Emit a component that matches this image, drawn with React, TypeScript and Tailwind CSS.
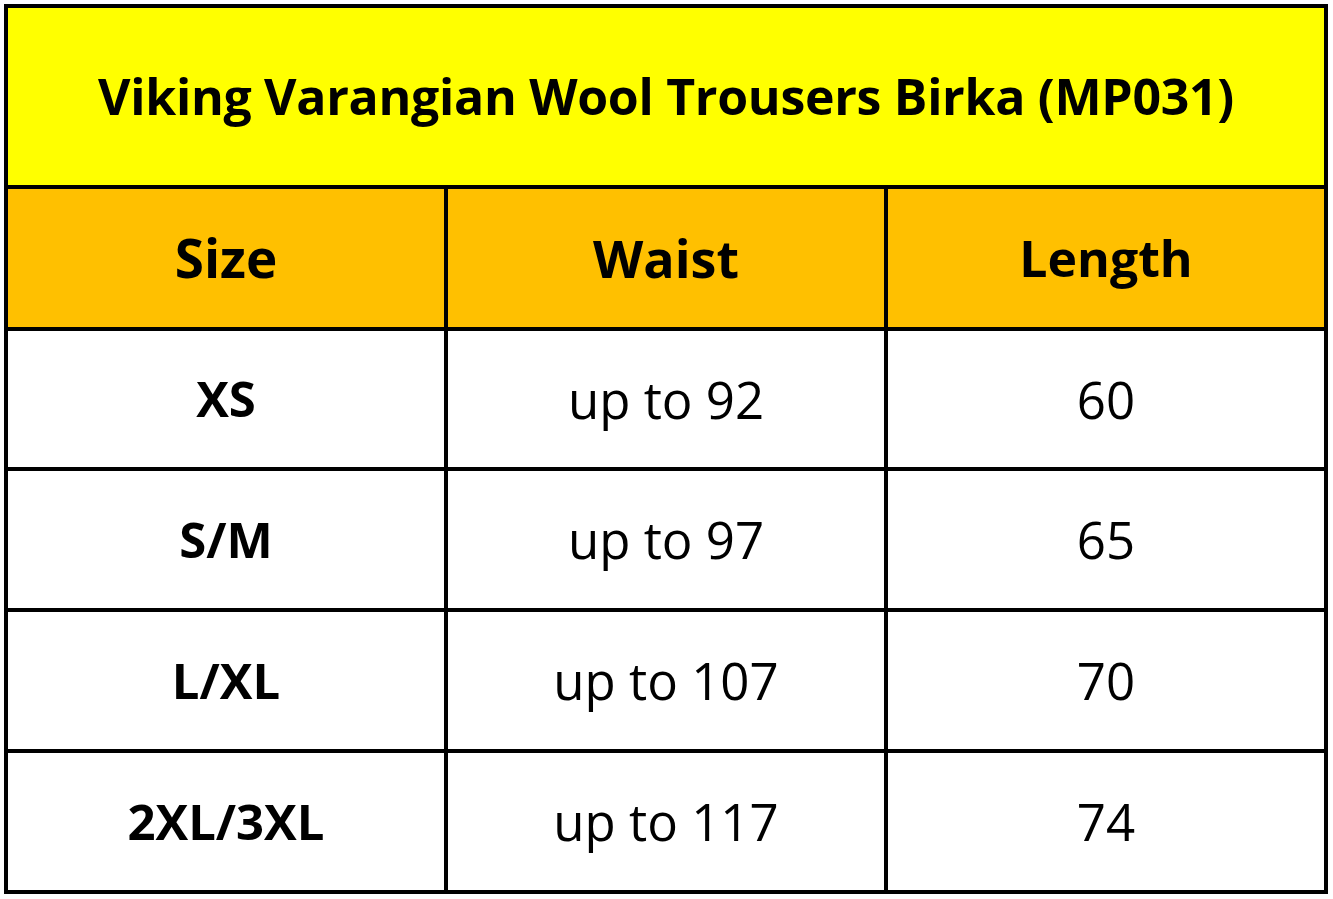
import React from "react";

const rows = [
  ["XS", "up to 92", "60"],
  ["S/M", "up to 97", "65"],
  ["L/XL", "up to 107", "70"],
  ["2XL/3XL", "up to 117", "74"],
];

export default function App() {
  return (
    <div className="w-[1333px] h-[899px] bg-white pt-[4px] pl-[4px]" style={{ fontFamily: '"Open Sans", "Noto Sans", sans-serif' }}>
      <div className="w-[1324px] h-[890px] border-4 border-black flex flex-col text-black">
        <div className="h-[177px] bg-[#ffff00] flex items-center justify-center">
          <span className="text-[50px] font-bold tracking-[-0.3px]">Viking Varangian Wool Trousers Birka (MP031)</span>
        </div>
        <div className="h-[142px] border-t-4 border-black bg-[#ffc000] grid grid-cols-[436px_4px_436px_4px_436px]">
          <div className="flex items-center justify-center text-[53px] font-bold">Size</div>
          <div className="bg-black" />
          <div className="flex items-center justify-center text-[52px] font-bold">Waist</div>
          <div className="bg-black" />
          <div className="flex items-center justify-center text-[50px] font-bold">Length</div>
        </div>
        {rows.map((r, i) => (
          <div key={i} className={`${i === 0 ? "h-[140px]" : "h-[141px]"} border-t-4 border-black grid grid-cols-[436px_4px_436px_4px_436px]`}>
            <div className="flex items-center justify-center text-[49px] font-bold">{r[0]}</div>
            <div className="bg-black" />
            <div className="flex items-center justify-center text-[51px]">{r[1]}</div>
            <div className="bg-black" />
            <div className="flex items-center justify-center text-[51px]">{r[2]}</div>
          </div>
        ))}
      </div>
    </div>
  );
}
